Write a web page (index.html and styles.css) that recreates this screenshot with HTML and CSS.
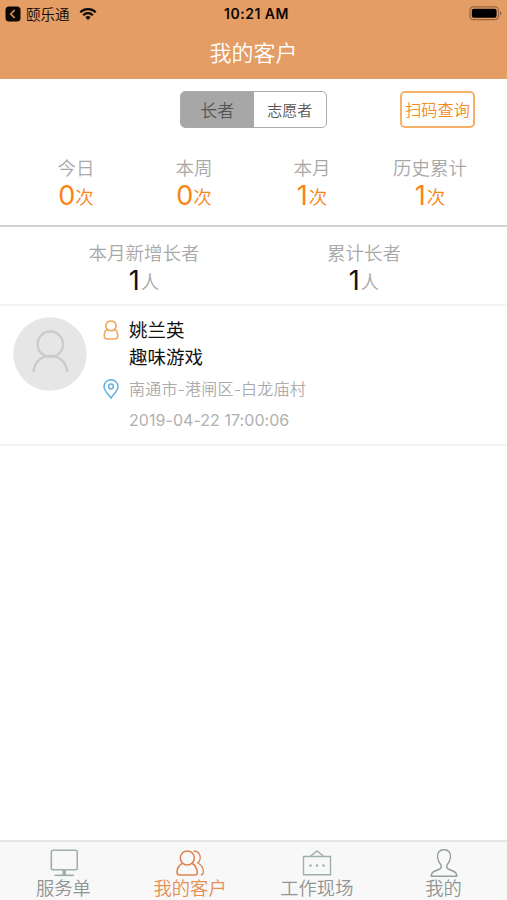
FILE: index.html
```html
<!DOCTYPE html>
<html lang="zh-CN">
<head>
<meta charset="utf-8">
<meta name="viewport" content="width=device-width, initial-scale=1">
<title>我的客户</title>
<link rel="stylesheet" href="styles.css">
</head>
<body>
<div class="app">
  <header class="header">
    <div class="status">
      <div class="status-left">
        <svg class="back" width="16" height="16" viewBox="0 0 16 16"><rect x="0.5" y="0.5" width="15" height="15" rx="3.5" fill="#0c0703"/><path d="M9.7 4 5.7 8l4 4" fill="none" stroke="#e39d65" stroke-width="1.5"/></svg>
        <span class="carrier">颐乐通</span>
        <svg class="wifi" width="18" height="14" viewBox="0 0 18 14"><g fill="none" stroke="#0c0703" stroke-width="2.3"><path d="M1.3 5.2a11 11 0 0 1 15.4 0"/><path d="M4.2 8.2a6.8 6.8 0 0 1 9.6 0"/></g><path d="M6.3 10.3a3.9 3.9 0 0 1 5.4 0L9 13z" fill="#0c0703"/></svg>
      </div>
      <span class="clock">10:21 AM</span>
      <svg class="battery" width="33" height="15" viewBox="0 0 33 15"><rect x="0.9" y="0.9" width="28.6" height="12.8" rx="3.6" fill="none" stroke="#99663e" stroke-width="1.2"/><rect x="2.8" y="2.8" width="24.8" height="9" rx="2" fill="#000"/><path d="M31 5.2q1.6.6 1.6 2.1T31 9.4z" fill="#99663e"/></svg>
    </div>
    <h1 class="title">我的客户</h1>
  </header>

  <div class="toolbar">
    <div class="segment">
      <button class="seg seg-on">长者</button>
      <button class="seg">志愿者</button>
    </div>
    <button class="scan">扫码查询</button>
  </div>

  <section class="stats">
    <div class="stat"><span class="label">今日</span><span class="value"><b>0</b>次</span></div>
    <div class="stat"><span class="label">本周</span><span class="value"><b>0</b>次</span></div>
    <div class="stat"><span class="label">本月</span><span class="value"><b class="one">1</b>次</span></div>
    <div class="stat"><span class="label">历史累计</span><span class="value"><b class="one">1</b>次</span></div>
  </section>

  <section class="totals">
    <div class="stat"><span class="label">本月新增长者</span><span class="value people"><b class="one">1</b>人</span></div>
    <div class="stat"><span class="label">累计长者</span><span class="value people"><b class="one">1</b>人</span></div>
  </section>

  <main class="list">
    <article class="customer">
      <svg class="avatar" width="74" height="74" viewBox="0 0 74 74"><circle cx="37" cy="37" r="36.7" fill="#e6e6e6"/><g fill="none" stroke="#cbcbcb" stroke-width="2.3"><circle cx="37.3" cy="27.2" r="12.7"/><path d="M20.5 55C21.5 45 28 38.8 37.3 38.8S53.2 45 54.2 55"/></g></svg>
      <div class="info">
        <svg class="person" width="16" height="20" viewBox="0 0 16 20"><g fill="none" stroke="#f3a75c" stroke-width="1.6"><path d="M4.300 9.600C1.900 6.800 2.300 1 8 1s6.100 5.800 3.700 8.600"/><path d="M4.300 9.400C2 10.600 1.300 13 1.300 15.500 1.300 18 2.300 19 4.300 19h7.400c2 0 3-1 3-3.500 0-2.500-.7-4.900-3-6.100C9.800 11.200 6.200 11.200 4.300 9.400z"/></g></svg>
        <div class="names"><p>姚兰英</p><p>趣味游戏</p></div>
        <svg class="pin" width="16" height="20" viewBox="0 0 16 20"><g fill="none" stroke="#62b1df" stroke-width="1.5"><path d="M8 19C5.500 15.500 1 11.500 1 7.700a7 7 0 0 1 14 0C15 11.500 10.500 15.500 8 19z"/><circle cx="8" cy="7.500" r="2.400"/></g></svg>
        <div class="meta"><p class="address">南通市-港闸区-白龙庙村</p><p class="time">2019-04-22 17:00:06</p></div>
      </div>
    </article>
  </main>

  <nav class="tabs">
    <a class="tab">
      <svg width="30" height="30" viewBox="0 0 30 30"><g fill="none" stroke="#9db0aa" stroke-width="1.6"><rect x="3.300" y="1.300" width="26" height="19.500" rx="2"/><path d="M6.500 26.300h19.500"/><path d="M16.200 21v5" stroke-width="3.500"/></g></svg>
      <span>服务单</span>
    </a>
    <a class="tab tab-on">
      <svg width="30" height="30" viewBox="0 0 30 30"><g fill="none" stroke="#dc8551" stroke-width="1.6"><circle cx="12.300" cy="9" r="7"/><path d="M7.500 14.200C3.500 16.500 2 19.500 2 23.200 2 25 3 26 4.800 26h15c1.800 0 2.700-1 2.500-2.800-.3-4-2-7-5.300-9"/><path d="M18.500 2.300c6.500-.5 9 7 4.300 11.700 3.600 2 5.600 5 5.600 9 0 1.700-1 2.700-2.600 3" stroke-width="1.300"/></g></svg>
      <span>我的客户</span>
    </a>
    <a class="tab">
      <svg width="30" height="30" viewBox="0 0 30 30"><g fill="none" stroke="#9db0aa" stroke-width="1.4"><path d="M1.500 7.500h27v18.300h-27zM8 7.500 15 2l7 5.500"/></g><g fill="#9db0aa"><circle cx="8.500" cy="16.500" r="1.200"/><circle cx="15" cy="16.500" r="1.200"/><circle cx="21.500" cy="16.500" r="1.200"/></g></svg>
      <span>工作现场</span>
    </a>
    <a class="tab">
      <svg width="30" height="30" viewBox="0 0 30 30"><path d="M15 .8c-5 0-7 3.200-6.400 7.700.4 3.500 1.500 5.500 3.400 7.500.6 1.700.4 3.200-1.200 4L5 22.500C3 23.500 2.200 24.800 2.200 27.200h25.600c0-2.400-.8-3.700-2.800-4.700L19.200 20c-1.600-.8-1.800-2.300-1.200-4 1.900-2 3-4 3.400-7.500C22 4 20 .8 15 .8z" fill="none" stroke="#94a09c" stroke-width="1.4"/></svg>
      <span>我的</span>
    </a>
  </nav>
</div>
</body>
</html>
```

FILE: styles.css
```css
* {
  box-sizing: border-box;
}

body,
h1,
p {
  margin: 0;
}

body {
  font-family: "Noto Sans CJK SC", sans-serif;
  font-weight: 350;
  background: #fff;
}

button {
  padding: 0;
  border: 0;
  background: none;
  font: inherit;
}

.app {
  display: flex;
  flex-direction: column;
  height: 900px;
  overflow: hidden;
}

.header {
  height: 79px;
  background: #e39d65;
}

.status {
  display: grid;
  grid-template-columns: 1fr auto 1fr;
  align-items: center;
  height: 28px;
  padding: 0 5px;
  color: #0c0703;
}

.status-left {
  display: flex;
  align-items: center;
}

.carrier {
  margin: -1px 9px 0 5px;
  font-size: 14.5px;
  line-height: 20px;
}

.wifi {
  margin-top: -1px;
}

.clock {
  margin-left: 6px;
  font: 600 14px/20px Inter, sans-serif;
  letter-spacing: 0.5px;
}

.battery {
  justify-self: end;
  margin-top: -1px;
}

.title {
  color: #fff;
  font-size: 22px;
  line-height: 46px;
  font-weight: 350;
  text-align: center;
}

.toolbar {
  display: flex;
  justify-content: space-between;
  height: 75px;
  padding: 12px 32px 0 180px;
}

.segment {
  display: flex;
  width: 147px;
  height: 37px;
  border: 1.5px solid #aaa;
  border-radius: 5px;
  overflow: hidden;
}

.seg {
  flex: 1;
  color: #555;
  font-size: 15px;
}

.seg-on {
  background: #a7a7a7;
  font-size: 17px;
}

.scan {
  width: 75px;
  height: 37px;
  border: 2px solid #f7b068;
  border-radius: 5px;
  color: #f58a1f;
  font-size: 16.2px;
  line-height: 30px;
  padding-bottom: 2px;
  white-space: nowrap;
}

.stats {
  display: grid;
  grid-template-columns: repeat(4, 118px);
  height: 73px;
  padding-left: 17px;
  border-bottom: 2px solid #d2d2d2;
}

.totals {
  display: grid;
  grid-template-columns: repeat(2, 220px);
  height: 79px;
  padding: 12px 0 0 34px;
  border-bottom: 2px solid #f3f3f3;
}

.stat {
  display: flex;
  flex-direction: column;
  align-items: center;
}

.label {
  color: #a8a8a8;
  font-size: 18.5px;
  line-height: 27px;
}

.value {
  display: flex;
  color: #fa8414;
  font-size: 18.5px;
  line-height: 31px;
}

.value b {
  font: 400 27px/29px Inter, sans-serif;
}

.value .one {
  padding-right: 1px;
}

.people {
  color: #a8a8a8;
}

.people b {
  color: #111;
}

.list {
  flex: 1;
}

.customer {
  display: flex;
  gap: 16px;
  height: 140px;
  padding: 11px 13px 0;
  border-bottom: 2px solid #f3f3f3;
}

.info {
  display: grid;
  grid-template-columns: 16px 1fr;
  grid-template-rows: 57px auto;
  column-gap: 10px;
}

.person {
  margin-top: 3px;
}

.pin {
  margin-top: 5px;
}

.names {
  margin-top: -1px;
  color: #111;
  font-size: 18.5px;
  line-height: 27px;
  font-weight: 400;
}

.meta {
  color: #ababab;
  font-size: 16px;
  line-height: 31px;
}

.address {
  font-family: Inter, "Noto Sans CJK SC", sans-serif;
  letter-spacing: 0.2px;
}

.time {
  font-family: Inter, sans-serif;
  font-weight: 400;
  letter-spacing: 0.05px;
  color: #b0b0b0;
}

.tabs {
  display: grid;
  grid-template-columns: repeat(4, 1fr);
  height: 60px;
  border-top: 2px solid #e6e6e6;
  background: #f8f8f8;
}

.tab {
  display: flex;
  flex-direction: column;
  align-items: center;
  padding-top: 7px;
  color: #8f9593;
  font-size: 18.3px;
  line-height: 22px;
}

.tab svg {
  flex: none;
  margin-bottom: -3px;
}

.tab-on {
  color: #e58f52;
}
```
